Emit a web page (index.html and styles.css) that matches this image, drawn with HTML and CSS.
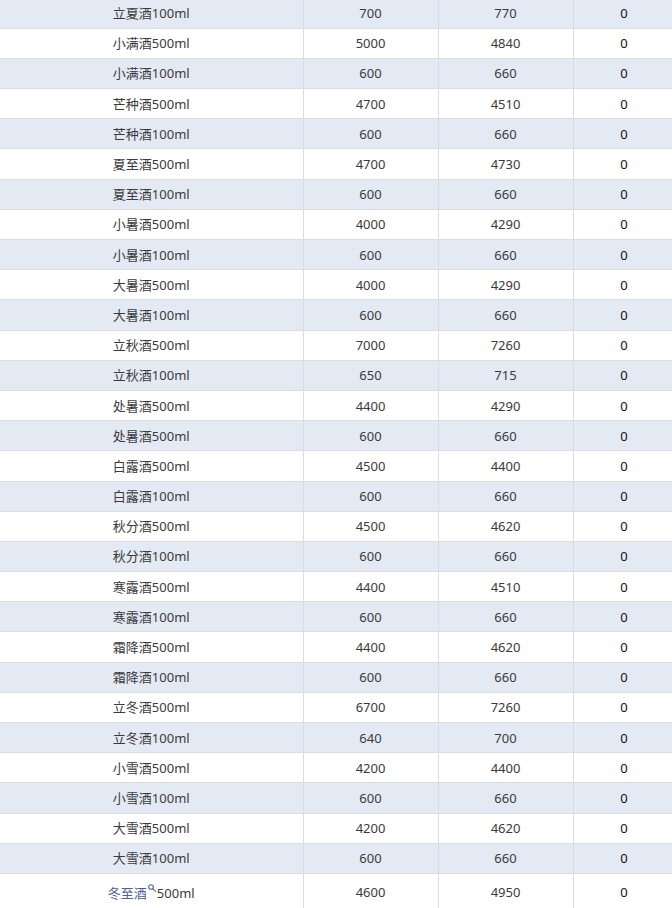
FILE: index.html
```html
<!DOCTYPE html>
<html lang="zh">
<head>
<meta charset="utf-8">
<link rel="stylesheet" href="styles.css">
</head>
<body>
<table class="grid">
<colgroup><col class="c1"><col class="c2"><col class="c3"><col class="c4"></colgroup>
<tbody>
<tr class="alt"><td>立夏酒100ml</td><td>700</td><td>770</td><td class="z">0</td></tr>
<tr><td>小满酒500ml</td><td>5000</td><td>4840</td><td class="z">0</td></tr>
<tr class="alt"><td>小满酒100ml</td><td>600</td><td>660</td><td class="z">0</td></tr>
<tr><td>芒种酒500ml</td><td>4700</td><td>4510</td><td class="z">0</td></tr>
<tr class="alt"><td>芒种酒100ml</td><td>600</td><td>660</td><td class="z">0</td></tr>
<tr><td>夏至酒500ml</td><td>4700</td><td>4730</td><td class="z">0</td></tr>
<tr class="alt"><td>夏至酒100ml</td><td>600</td><td>660</td><td class="z">0</td></tr>
<tr><td>小暑酒500ml</td><td>4000</td><td>4290</td><td class="z">0</td></tr>
<tr class="alt"><td>小暑酒100ml</td><td>600</td><td>660</td><td class="z">0</td></tr>
<tr><td>大暑酒500ml</td><td>4000</td><td>4290</td><td class="z">0</td></tr>
<tr class="alt"><td>大暑酒100ml</td><td>600</td><td>660</td><td class="z">0</td></tr>
<tr><td>立秋酒500ml</td><td>7000</td><td>7260</td><td class="z">0</td></tr>
<tr class="alt"><td>立秋酒100ml</td><td>650</td><td>715</td><td class="z">0</td></tr>
<tr><td>处暑酒500ml</td><td>4400</td><td>4290</td><td class="z">0</td></tr>
<tr class="alt"><td>处暑酒500ml</td><td>600</td><td>660</td><td class="z">0</td></tr>
<tr><td>白露酒500ml</td><td>4500</td><td>4400</td><td class="z">0</td></tr>
<tr class="alt"><td>白露酒100ml</td><td>600</td><td>660</td><td class="z">0</td></tr>
<tr><td>秋分酒500ml</td><td>4500</td><td>4620</td><td class="z">0</td></tr>
<tr class="alt"><td>秋分酒100ml</td><td>600</td><td>660</td><td class="z">0</td></tr>
<tr><td>寒露酒500ml</td><td>4400</td><td>4510</td><td class="z">0</td></tr>
<tr class="alt"><td>寒露酒100ml</td><td>600</td><td>660</td><td class="z">0</td></tr>
<tr><td>霜降酒500ml</td><td>4400</td><td>4620</td><td class="z">0</td></tr>
<tr class="alt"><td>霜降酒100ml</td><td>600</td><td>660</td><td class="z">0</td></tr>
<tr><td>立冬酒500ml</td><td>6700</td><td>7260</td><td class="z">0</td></tr>
<tr class="alt"><td>立冬酒100ml</td><td>640</td><td>700</td><td class="z">0</td></tr>
<tr><td>小雪酒500ml</td><td>4200</td><td>4400</td><td class="z">0</td></tr>
<tr class="alt"><td>小雪酒100ml</td><td>600</td><td>660</td><td class="z">0</td></tr>
<tr><td>大雪酒500ml</td><td>4200</td><td>4620</td><td class="z">0</td></tr>
<tr class="alt"><td>大雪酒100ml</td><td>600</td><td>660</td><td class="z">0</td></tr>
<tr class="last"><td><span class="link">冬至酒</span><sup class="search"><svg width="8" height="8" viewBox="0 0 8 8"><circle cx="3" cy="3" r="2.3" fill="none" stroke="#5b6a9c" stroke-width="1.1"/><path d="M4.7 4.7 L7.4 7.4" stroke="#5b6a9c" stroke-width="1.2" stroke-linecap="round"/></svg></sup>500ml</td><td>4600</td><td>4950</td><td class="z">0</td></tr>
</tbody>
</table>
</body>
</html>
```
FILE: styles.css
```css
html, body {
  margin: 0;
  padding: 0;
  overflow: hidden;
  background: #ffffff;
}
body {
  font-family: "Noto Sans", "Noto Sans CJK SC", sans-serif;
  font-size: 13px;
  color: #3a3a3a;
}
.grid {
  border-collapse: collapse;
  table-layout: fixed;
  width: 675px;
  margin-top: -1.5px;
}
.c1 { width: 303px; }
.c2 { width: 135px; }
.c3 { width: 135px; }
.c4 { width: 102px; }
.grid td {
  height: 29.19px;
  padding: 0;
  text-align: center;
  vertical-align: middle;
  border-right: 1px solid #dcdcdc;
  border-bottom: 1px solid #dcdcdc;
  line-height: 16px;
  white-space: nowrap;
}
.grid tr.alt td {
  background: #e4eaf4;
}
.grid td.z {
  color: #111111;
}
.grid tr.last td {
  height: 33px;
  padding-top: 2px;
}
.link {
  color: #4f5f95;
}
.search {
  display: inline-block;
  vertical-align: 6px;
  margin: 0 1px 0 1px;
  line-height: 8px;
}
.search svg {
  display: block;
}
```
